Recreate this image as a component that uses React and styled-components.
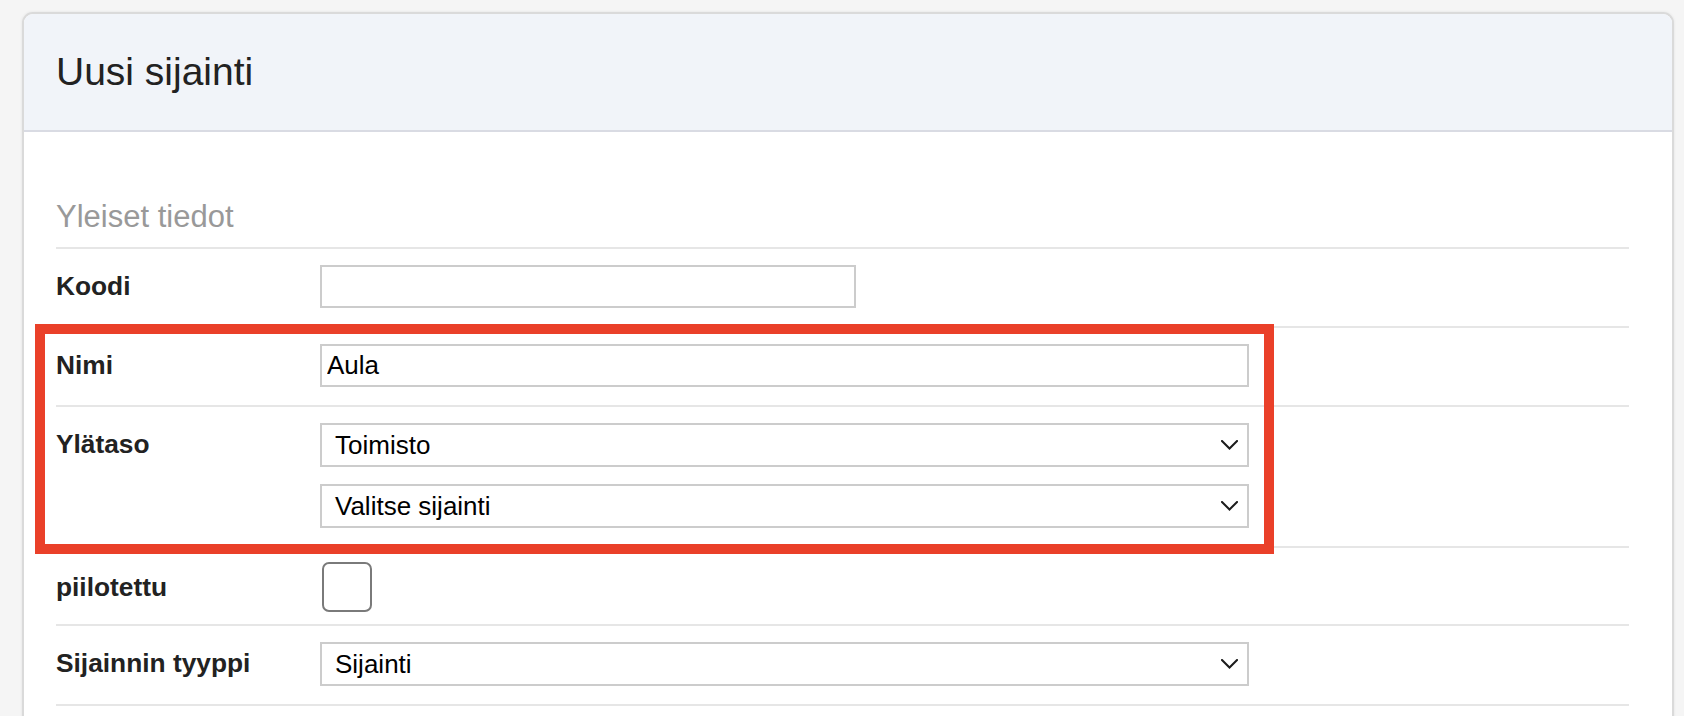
import styled, { createGlobalStyle } from 'styled-components';

const GlobalStyle = createGlobalStyle`
  html,
  body {
    margin: 0;
    padding: 0;
    background: #f5f5f5;
    overflow: hidden;
    font-family: 'Liberation Sans', Arial, Helvetica, sans-serif;
  }
`;

const Chevron = () => (
  <svg width='17' height='10' viewBox='0 0 17 10' fill='none'>
    <polyline
      points='1,1 8.5,8.5 16,1'
      stroke='#1c1c1c'
      strokeWidth='2'
      strokeLinecap='square'
    />
  </svg>
);

const SelectField = ({ value }) => (
  <SelectBox role='combobox' aria-expanded='false'>
    <span>{value}</span>
    <Chevron />
  </SelectBox>
);

const App = () => {
  return (
    <Page>
      <GlobalStyle />
      <Card>
        <Header>
          <Title>Uusi sijainti</Title>
        </Header>
        <Body>
          <SectionTitle>Yleiset tiedot</SectionTitle>
          <Row>
            <Label>Koodi</Label>
            <TextInput $width='536px' defaultValue='' />
          </Row>
          <Highlight>
            <Row>
              <Label>Nimi</Label>
              <TextInput $width='929px' defaultValue='Aula' />
            </Row>
            <Row>
              <Label>Ylätaso</Label>
              <Controls>
                <SelectField value='Toimisto' />
                <SelectField value='Valitse sijainti' />
              </Controls>
            </Row>
            <Frame />
          </Highlight>
          <Row $center $pad='14px 0 12px'>
            <Label>piilotettu</Label>
            <Checkbox type='checkbox' />
          </Row>
          <Row>
            <Label>Sijainnin tyyppi</Label>
            <Controls>
              <SelectField value='Sijainti' />
            </Controls>
          </Row>
        </Body>
      </Card>
    </Page>
  );
};

const Page = styled.div`
  padding: 12px 10px 0 22px;
`;

const Card = styled.section`
  background: #fff;
  border: 2px solid #dadada;
  border-radius: 11px;
  box-shadow: 0 0 3px rgba(0, 0, 0, 0.08);
  overflow: hidden;
`;

const Header = styled.header`
  height: 116px;
  display: flex;
  align-items: center;
  padding: 0 32px;
  background: #f1f4f9;
  border-bottom: 2px solid #d9dbe3;
`;

const Title = styled.h1`
  margin: 0;
  font-size: 39px;
  font-weight: 400;
  color: #222;
`;

const Body = styled.div`
  padding: 67px 43px 60px 32px;
`;

const SectionTitle = styled.h2`
  margin: 0;
  padding-bottom: 12px;
  font-size: 31px;
  line-height: 36px;
  font-weight: 400;
  color: #999;
  border-bottom: 2px solid #e6e6e6;
`;

const Row = styled.div`
  display: flex;
  align-items: ${(p) => (p.$center ? 'center' : 'flex-start')};
  padding: ${(p) => p.$pad || '16px 0 18px'};
  border-bottom: 2px solid #e6e6e6;
`;

const Label = styled.label`
  width: 264px;
  flex-shrink: 0;
  font-size: 26.3px;
  line-height: 43px;
  font-weight: 700;
  color: #222;
`;

const Controls = styled.div`
  display: flex;
  flex-direction: column;
  gap: 17px;
  width: 929px;
`;

const TextInput = styled.input`
  box-sizing: border-box;
  width: ${(p) => p.$width};
  height: 43px;
  margin: 0;
  padding: 0 5px;
  border: 2px solid #ccc;
  border-radius: 0;
  outline: none;
  font-family: inherit;
  font-size: 26px;
  color: #000;
  background: #fff;
`;

const SelectBox = styled.div`
  box-sizing: border-box;
  height: 44px;
  display: flex;
  align-items: center;
  justify-content: space-between;
  padding: 0 9px 0 13px;
  border: 2px solid #ccc;
  font-size: 26px;
  color: #000;
  background: #fff;
`;

const Checkbox = styled.input`
  appearance: none;
  box-sizing: border-box;
  width: 50px;
  height: 50px;
  margin: 0 0 0 2px;
  border: 2px solid #7a7a7a;
  border-radius: 7px;
  background: #fff;
`;

const Highlight = styled.div`
  position: relative;
`;

const Frame = styled.div`
  position: absolute;
  top: -4px;
  left: -21px;
  right: 355px;
  bottom: -6px;
  border: 10px solid #ea4029;
  pointer-events: none;
  z-index: 2;
`;

export default App;
